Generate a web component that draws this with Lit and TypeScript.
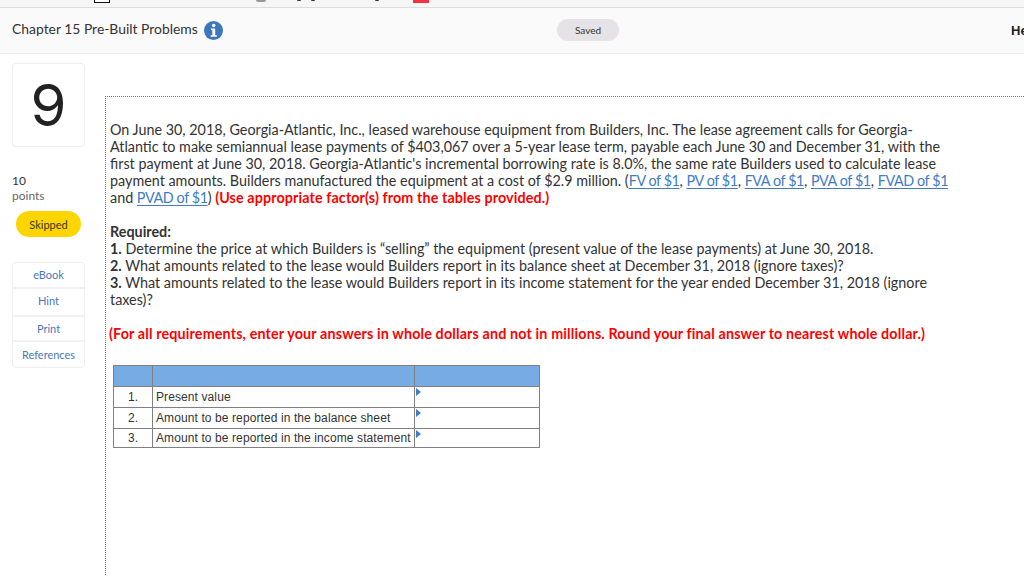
import { LitElement, html, css } from "lit";
import { customElement } from "lit/decorators.js";

const tableRows = [
  ["1.", "Present value"],
  ["2.", "Amount to be reported in the balance sheet"],
  ["3.", "Amount to be reported in the income statement"],
];

@customElement("app-root")
export class AppRoot extends LitElement {
  static styles = css`
    :host {
      display: block;
      width: 1024px;
      height: 576px;
      overflow: hidden;
      background: #fff;
      font-family: Lato, "Open Sans", sans-serif;
      color: #333;
    }

    .strip {
      height: 7px;
      background: #f6f6f6;
      border-bottom: 1px solid #dcdcdc;
      display: flex;
      align-items: flex-start;
      padding-left: 94px;
    }
    .strip .box {
      width: 14px;
      height: 2px;
      background: #fff;
      border: 1px solid #111;
      border-top: none;
    }
    .strip .dome {
      width: 10px;
      height: 2px;
      margin-left: 146px;
      background: #999;
      border-radius: 0 0 5px 5px;
    }
    .strip .tick {
      width: 4px;
      height: 1px;
      background: #333;
      border-radius: 0 0 2px 2px;
    }
    .strip .t1 {
      margin-left: 31px;
    }
    .strip .t2 {
      margin-left: 10px;
    }
    .strip .t3 {
      margin-left: 60px;
    }
    .strip .flag {
      width: 16px;
      height: 3px;
      margin-left: 34px;
      background: #f5333f;
    }

    .header {
      height: 44px;
      padding: 0 0 1px 12px;
      background: #fafafa;
      border-bottom: 1px solid #ececec;
      display: grid;
      grid-template-columns: 545px 62px 1fr;
      align-items: center;
    }
    .title {
      display: flex;
      align-items: center;
      gap: 6px;
      font-size: 13.9px;
      color: #333;
    }
    .title span {
      padding-bottom: 3px;
    }
    .title svg {
      width: 19px;
      height: 19px;
    }
    .saved {
      height: 22px;
      border-radius: 11px;
      background: #e5e3e6;
      font-size: 10px;
      display: flex;
      align-items: center;
      justify-content: center;
    }
    .help {
      justify-self: end;
      width: 13px;
      overflow: hidden;
      font-weight: 700;
      font-size: 13px;
      color: #222;
      font-family: "Liberation Sans", sans-serif;
      white-space: nowrap;
    }

    .body {
      display: flex;
    }
    .side {
      width: 105px;
      flex: none;
      box-sizing: border-box;
      padding: 9px 0 0 12px;
    }
    .number {
      width: 73px;
      height: 84px;
      box-sizing: border-box;
      border: 1px solid #eee;
      border-radius: 4px;
      display: flex;
      align-items: center;
      justify-content: center;
      font-family: Inter, sans-serif;
      font-size: 58px;
      color: #222;
    }
    .points {
      margin-top: 26px;
      font-size: 12px;
      line-height: 15px;
      color: #666;
    }
    .points b {
      display: block;
      font-weight: 400;
      color: #333;
    }
    .skipped {
      margin: 8px 0 0 4px;
      width: 65px;
      height: 26px;
      border-radius: 13px;
      background: #ffd500;
      display: flex;
      align-items: center;
      justify-content: center;
      font-size: 11px;
      color: #333;
    }
    .tools {
      margin-top: 25px;
      width: 73px;
      box-sizing: border-box;
      border: 1px solid #eee;
      border-radius: 4px;
      display: flex;
      flex-direction: column;
      font-size: 11px;
      color: #4a78b8;
      text-align: center;
    }
    .tools span {
      box-sizing: border-box;
      display: flex;
      align-items: center;
      justify-content: center;
      height: 26px;
      padding-bottom: 1px;
      border-bottom: 2px solid #f1f1f1;
    }
    .tools .hint {
      height: 28px;
      padding-bottom: 4px;
    }
    .tools .print {
      height: 25px;
      padding-bottom: 0;
    }
    .tools .refs {
      height: 25px;
      border-bottom: none;
    }

    .content {
      flex: 1;
      margin-top: 42px;
      height: 480px;
      border-left: 1px dotted #4a7ab5;
      border-top: 1px dotted #4a7ab5;
      padding: 24px 0 0 4px;
      font-size: 14.35px;
      line-height: 17px;
      color: #333;
    }
    p {
      margin: 0;
      width: 842px;
    }
    .required {
      margin-top: 17px;
    }
    .note {
      margin-top: 17px;
      width: 900px;
      margin-left: -1px;
      color: #f00;
      font-weight: 700;
      letter-spacing: 0.13px;
    }
    .red {
      color: #f00;
      font-weight: 700;
      letter-spacing: 0.1px;
    }
    a {
      color: #3f7cc4;
      text-decoration: underline;
      text-underline-offset: 2px;
      white-space: nowrap;
      letter-spacing: -0.4px;
    }
    b {
      font-weight: 700;
    }

    table {
      margin: 23px 0 0 3px;
      border-collapse: collapse;
      table-layout: fixed;
      width: 427px;
      font-family: "Liberation Sans", sans-serif;
      font-size: 12px;
      letter-spacing: 0.1px;
      line-height: 14px;
      color: #333;
    }
    td {
      border: 1px solid #808080;
      height: 19px;
      padding: 0 3px 1px;
      white-space: nowrap;
      overflow: hidden;
    }
    tbody tr:last-child td {
      height: 17px;
    }
    thead td {
      background: #76abe3;
    }
    .c1 {
      width: 39px;
    }
    .c2 {
      width: 262px;
    }
    .c3 {
      width: 125px;
    }
    .idx {
      padding: 0 0 1px;
      text-align: center;
    }
    .val {
      position: relative;
    }
    .val::before {
      content: "";
      position: absolute;
      left: 1px;
      top: 1px;
      border-left: 5px solid #3f7cc4;
      border-top: 4px solid transparent;
      border-bottom: 4px solid transparent;
    }
  `;

  render() {
    return html`
      <div class="strip">
        <span class="box"></span><span class="dome"></span><span class="tick t1"></span
        ><span class="tick t2"></span><span class="tick t3"></span><span class="flag"></span>
      </div>
      <div class="header">
        <div class="title">
          <span>Chapter 15 Pre-Built Problems</span>
          <svg viewBox="0 0 20 20">
            <circle cx="10" cy="10" r="10" fill="#3c76bd"></circle>
            <circle cx="10.2" cy="4.8" r="1.8" fill="#fff"></circle>
            <path d="M7.3 8h4.5v7h1.7v1.7H7v-1.7h1.8V9.7H7.3z" fill="#fff"></path>
          </svg>
        </div>
        <div class="saved">Saved</div>
        <div class="help">Help</div>
      </div>
      <div class="body">
        <div class="side">
          <div class="number">9</div>
          <div class="points"><b>10</b>points</div>
          <div class="skipped">Skipped</div>
          <div class="tools">
            <span>eBook</span>
            <span class="hint">Hint</span>
            <span class="print">Print</span>
            <span class="refs">References</span>
          </div>
        </div>
        <div class="content">
          <p>
            On June 30, 2018, Georgia-Atlantic, Inc., leased warehouse equipment from Builders, Inc. The lease agreement calls for Georgia-Atlantic to make semiannual lease payments of $403,067 over a 5-year lease term, payable each June 30 and December 31, with the first payment at June 30, 2018. Georgia-Atlantic's incremental borrowing rate is 8.0%, the same rate Builders used to calculate lease payment amounts. Builders manufactured the equipment at a cost of $2.9 million. (<a>FV of $1</a>, <a>PV of $1</a>, <a>FVA of $1</a>, <a>PVA of $1</a>, <a>FVAD of $1</a> and <a>PVAD of $1</a>) <span class="red">(Use appropriate factor(s) from the tables provided.)</span>
          </p>
          <p class="required">
            <b>Required:</b><br />
            <b>1.</b> Determine the price at which Builders is “selling” the equipment (present value of the lease payments) at June 30, 2018.<br />
            <b>2.</b> What amounts related to the lease would Builders report in its balance sheet at December 31, 2018 (ignore taxes)?<br />
            <b>3.</b> What amounts related to the lease would Builders report in its income statement for the year ended December 31, 2018 (ignore taxes)?
          </p>
          <p class="note">(For all requirements, enter your answers in whole dollars and not in millions. Round your final answer to nearest whole dollar.)</p>
          <table>
            <colgroup><col class="c1" /><col class="c2" /><col class="c3" /></colgroup>
            <thead>
              <tr><td></td><td></td><td></td></tr>
            </thead>
            <tbody>
              ${tableRows.map(
                (r) => html`<tr><td class="idx">${r[0]}</td><td>${r[1]}</td><td class="val"></td></tr>`
              )}
            </tbody>
          </table>
        </div>
      </div>
    `;
  }
}
